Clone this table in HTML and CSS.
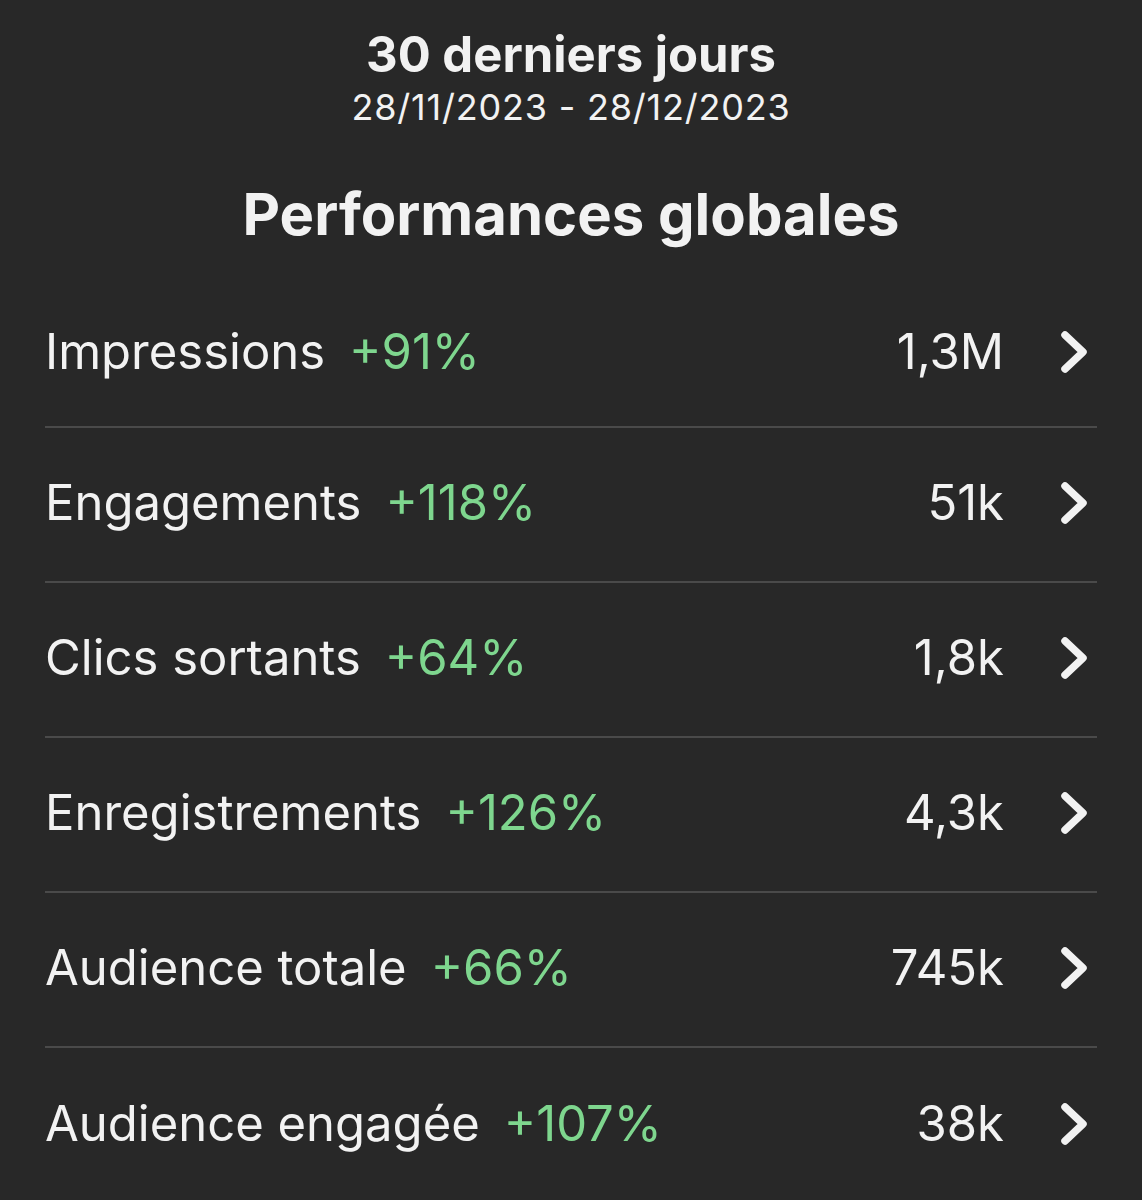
FILE: index.html
```html
<!DOCTYPE html>
<html lang="fr">
<head>
<meta charset="utf-8">
<link rel="stylesheet" href="styles.css">
</head>
<body>
<div class="page">
  <header class="period">
    <div class="period-title">30 derniers jours</div>
    <div class="period-dates">28/11/2023 - 28/12/2023</div>
  </header>
  <h1 class="section-title">Performances globales</h1>
  <ul class="metrics">
    <li class="metric"><span class="label">Impressions</span><span class="delta">+91%</span><span class="value">1,3M</span><svg class="chev" viewBox="0 0 30 44"><path d="M6 5 L24 22 L6 39"/></svg></li>
    <li class="metric"><span class="label">Engagements</span><span class="delta">+118%</span><span class="value">51k</span><svg class="chev" viewBox="0 0 30 44"><path d="M6 5 L24 22 L6 39"/></svg></li>
    <li class="metric"><span class="label">Clics sortants</span><span class="delta">+64%</span><span class="value">1,8k</span><svg class="chev" viewBox="0 0 30 44"><path d="M6 5 L24 22 L6 39"/></svg></li>
    <li class="metric"><span class="label">Enregistrements</span><span class="delta">+126%</span><span class="value">4,3k</span><svg class="chev" viewBox="0 0 30 44"><path d="M6 5 L24 22 L6 39"/></svg></li>
    <li class="metric"><span class="label">Audience totale</span><span class="delta">+66%</span><span class="value">745k</span><svg class="chev" viewBox="0 0 30 44"><path d="M6 5 L24 22 L6 39"/></svg></li>
    <li class="metric"><span class="label">Audience engagée</span><span class="delta">+107%</span><span class="value">38k</span><svg class="chev" viewBox="0 0 30 44"><path d="M6 5 L24 22 L6 39"/></svg></li>
  </ul>
</div>
</body>
</html>
```
FILE: styles.css
```css
html, body {
  margin: 0;
  padding: 0;
  background: #282828;
}
body {
  font-family: Inter, "Noto Sans", "Liberation Sans", sans-serif;
  color: #f2f2f2;
}
.page {
  width: 1142px;
  height: 1200px;
  overflow: hidden;
  padding: 0 45px;
  box-sizing: border-box;
}
.period {
  text-align: center;
  padding-top: 27px;
}
.period-title {
  font-size: 49px;
  font-weight: 700;
  line-height: 56px;
}
.period-dates {
  font-size: 36px;
  font-weight: 400;
  line-height: 48px;
  letter-spacing: 0.8px;
}
.section-title {
  margin: 0;
  text-align: center;
  font-size: 58px;
  font-weight: 700;
  line-height: 72px;
  padding-top: 47px;
}
.metrics {
  list-style: none;
  margin: 0;
  padding: 0;
  margin-top: 28px;
}
.metric {
  display: flex;
  align-items: center;
  border-bottom: 2px solid #4a4a4a;
  font-size: 49px;
  padding-bottom: 4px;
  box-sizing: border-box;
  height: 155px;
}
.metric:first-child { height: 150px; padding-bottom: 1px; }
.metric:last-child { border-bottom: none; }
.label {
  font-weight: 400;
}
.delta {
  color: #7ed68e;
  margin-left: 24px;
}
.value {
  margin-left: auto;
}
.chev {
  width: 30px;
  height: 44px;
  margin-left: 55px;
  margin-right: 8px;
  fill: none;
  stroke: #f2f2f2;
  stroke-width: 7.5;
  stroke-linecap: round;
  stroke-linejoin: round;
}
```
